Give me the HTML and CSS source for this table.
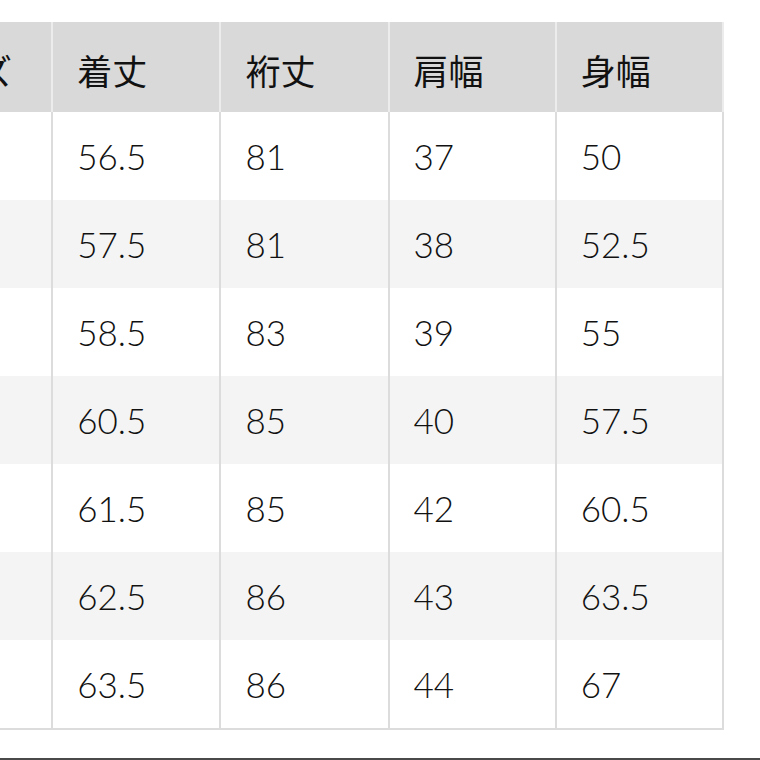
FILE: index.html
```html
<!DOCTYPE html>
<html lang="ja">
<head>
<meta charset="utf-8">
<title>サイズ表</title>
<link rel="stylesheet" href="styles.css">
</head>
<body>
<div class="page">
  <div class="wrap">
    <table class="size-table">
      <colgroup>
        <col class="c-size"><col class="c1"><col class="c2"><col class="c3"><col class="c4">
      </colgroup>
      <thead>
        <tr><th>サイズ</th><th>着丈</th><th>裄丈</th><th>肩幅</th><th>身幅</th></tr>
      </thead>
      <tbody>
        <tr><td>XS</td><td>56.5</td><td>81</td><td>37</td><td>50</td></tr>
        <tr class="alt"><td>S</td><td>57.5</td><td>81</td><td>38</td><td>52.5</td></tr>
        <tr><td>M</td><td>58.5</td><td>83</td><td>39</td><td>55</td></tr>
        <tr class="alt"><td>L</td><td>60.5</td><td>85</td><td>40</td><td>57.5</td></tr>
        <tr><td>XL</td><td>61.5</td><td>85</td><td>42</td><td>60.5</td></tr>
        <tr class="alt"><td>XXL</td><td>62.5</td><td>86</td><td>43</td><td>63.5</td></tr>
        <tr><td>3XL</td><td>63.5</td><td>86</td><td>44</td><td>67</td></tr>
      </tbody>
    </table>
  </div>
  <div class="bottom-bar"></div>
</div>
</body>
</html>
```
FILE: styles.css
```css
html, body {
  margin: 0;
  padding: 0;
  background: #ffffff;
}
.page {
  width: 760px;
  height: 760px;
  display: flex;
  flex-direction: column;
  overflow: hidden;
  font-family: Lato, "Noto Sans CJK JP", sans-serif;
  color: #111111;
}
.wrap {
  padding-top: 22px;
  overflow: hidden;
  flex: 1;
}
.size-table {
  margin-left: -116px;
  border-collapse: collapse;
  table-layout: fixed;
  width: 840px;
}
.c-size { width: 168px; }
.c1 { width: 168px; }
.c2 { width: 168px; }
.c3 { width: 167px; }
.c4 { width: 167px; }
.size-table th,
.size-table td {
  text-align: left;
  padding: 0 0 0 24px;
  border-right: 2px solid #dcdcdc;
  white-space: nowrap;
  overflow: hidden;
}
.size-table th {
  height: 90px;
  box-sizing: border-box;
  background: #d9d9d9;
  border-right-color: #ececec;
  font-family: "Noto Sans CJK JP", sans-serif;
  font-weight: 400;
  font-size: 35px;
  padding-top: 4px;
}
.size-table td {
  height: 88px;
  font-size: 35px;
  font-weight: 300;
}
.size-table tbody tr:last-child td {
  border-bottom: 2px solid #dcdcdc;
}
.size-table tr.alt td {
  background: #f4f4f4;
}
.bottom-bar {
  height: 2px;
  background: #4a4a4a;
}
```
